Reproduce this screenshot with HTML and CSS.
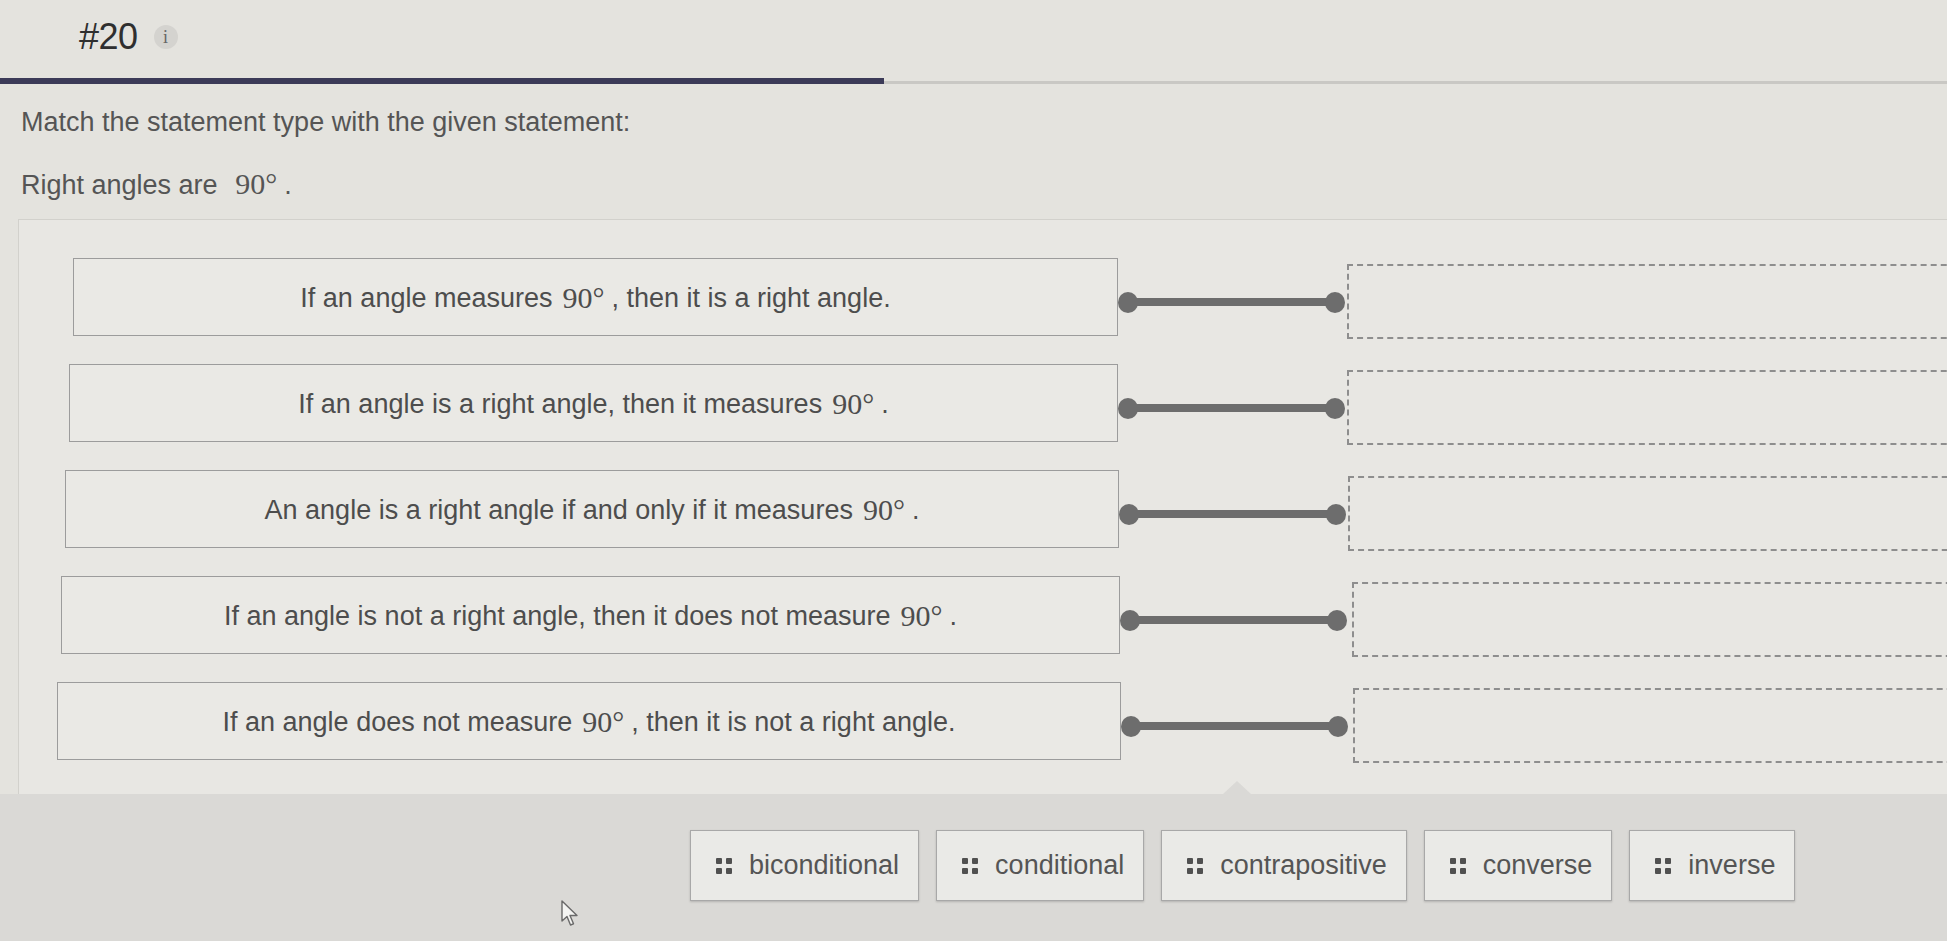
FILE: index.html
```html
<!DOCTYPE html>
<html lang="en">
<head>
<meta charset="utf-8">
<title>#20 Match statement types</title>
<link rel="stylesheet" href="styles.css">
</head>
<body>
<div class="page">
  <header class="qhead">
    <span class="qnum">#20</span>
    <span class="info">i</span>
  </header>
  <div class="progress"><div class="progress-fill"></div><div class="progress-track"></div></div>

  <div class="prompt">
    <p class="instr">Match the statement type with the given statement:</p>
    <p class="given">Right angles are <span class="math">90°</span>.</p>
  </div>

  <section class="panel">
    <div class="row r1">
      <div class="stmt">If an angle measures <span class="math">90°</span>, then it is a right angle.</div>
      <div class="link"><span class="dot"></span><span class="bar"></span><span class="dot"></span></div>
      <div class="drop"></div>
    </div>
    <div class="row r2">
      <div class="stmt">If an angle is a right angle, then it measures <span class="math">90°</span>.</div>
      <div class="link"><span class="dot"></span><span class="bar"></span><span class="dot"></span></div>
      <div class="drop"></div>
    </div>
    <div class="row r3">
      <div class="stmt">An angle is a right angle if and only if it measures <span class="math">90°</span>.</div>
      <div class="link"><span class="dot"></span><span class="bar"></span><span class="dot"></span></div>
      <div class="drop"></div>
    </div>
    <div class="row r4">
      <div class="stmt">If an angle is not a right angle, then it does not measure <span class="math">90°</span>.</div>
      <div class="link"><span class="dot"></span><span class="bar"></span><span class="dot"></span></div>
      <div class="drop"></div>
    </div>
    <div class="row r5">
      <div class="stmt">If an angle does not measure <span class="math">90°</span>, then it is not a right angle.</div>
      <div class="link"><span class="dot"></span><span class="bar"></span><span class="dot"></span></div>
      <div class="drop"></div>
    </div>
  </section>

  <section class="tray">
    <div class="chips">
      <div class="chip"><span class="grip"><i></i><i></i><i></i><i></i></span>biconditional</div>
      <div class="chip"><span class="grip"><i></i><i></i><i></i><i></i></span>conditional</div>
      <div class="chip"><span class="grip"><i></i><i></i><i></i><i></i></span>contrapositive</div>
      <div class="chip"><span class="grip"><i></i><i></i><i></i><i></i></span>converse</div>
      <div class="chip"><span class="grip"><i></i><i></i><i></i><i></i></span>inverse</div>
    </div>
  </section>

  <svg class="cursor" width="20" height="28" viewBox="0 0 20 28" aria-hidden="true">
    <path d="M2 1 L2 21 L7 16.5 L10.5 25 L13.5 23.8 L10 15.5 L17 15.5 Z" fill="#f4f4f2" stroke="#6a6a6a" stroke-width="1.4" stroke-linejoin="round"/>
  </svg>
</div>
</body>
</html>
```

FILE: styles.css
```css
* { box-sizing: border-box; }

html, body {
  margin: 0;
  padding: 0;
}

body {
  width: 1947px;
  height: 941px;
  overflow: hidden;
  background: #e4e3de;
  font-family: "Liberation Sans", Arial, sans-serif;
  color: #4d4d4d;
}

.page {
  position: relative;
  width: 1947px;
  height: 941px;
  overflow: hidden;
  display: flex;
  flex-direction: column;
}

/* header */
.qhead {
  height: 78px;
  display: flex;
  align-items: center;
  padding-left: 79px;
  padding-bottom: 4px;
}

.qnum {
  font-size: 36px;
  color: #2f2f2f;
  letter-spacing: -0.5px;
}

.info {
  width: 24px;
  height: 24px;
  margin-left: 16px;
  border-radius: 50%;
  background: #d4d3cf;
  color: #666;
  font-family: "Liberation Serif", serif;
  font-size: 18px;
  line-height: 24px;
  text-align: center;
}

/* progress */
.progress {
  display: flex;
  align-items: flex-end;
  height: 6px;
}

.progress-fill {
  width: 884px;
  height: 6px;
  background: #3c3b58;
}

.progress-track {
  flex: 1;
  height: 3px;
  background: #c9c8c4;
}

/* prompt */
.prompt {
  padding-left: 21px;
}

.instr,
.given {
  margin: 0;
  font-size: 27px;
  line-height: 36px;
  color: #555;
}

.instr { margin-top: 20px; }
.given { margin-top: 26px; }

.math {
  font-family: "Liberation Serif", "Times New Roman", serif;
  font-size: 30px;
  margin: 0 7px 0 10px;
}

/* panel */
.panel {
  margin-top: 16px;
  margin-left: 18px;
  width: 1950px;
  height: 575px;
  flex: none;
  border-top: 1px solid #d2d1cc;
  border-left: 1px solid #d2d1cc;
  background: #e8e7e3;
  padding-top: 38px;
  display: flex;
  flex-direction: column;
  gap: 28px;
}

.row {
  display: flex;
  height: 78px;
  flex: none;
}

.stmt {
  flex: none;
  width: 1045px;
  margin-left: 54px;
  height: 78px;
  border: 1px solid #9c9c9c;
  background: #eae9e5;
  display: flex;
  align-items: center;
  justify-content: center;
  padding-top: 2px;
  font-size: 27px;
  color: #4d4d4d;
  white-space: nowrap;
}

.r2 .stmt { margin-left: 50px; width: 1049px; }
.r3 .stmt { margin-left: 46px; width: 1054px; }
.r4 .stmt { margin-left: 42px; width: 1059px; }
.r5 .stmt { margin-left: 38px; width: 1064px; }

.link {
  flex: none;
  width: 229px;
  display: flex;
  align-items: center;
  padding: 10px 2px 0 0;
}

.dot {
  flex: none;
  width: 20px;
  height: 21px;
  border-radius: 50%;
  background: #6d6d6d;
}

.bar {
  flex: 1;
  height: 8px;
  margin: 0 -3px;
  background: #6d6d6d;
}

.drop {
  flex: none;
  width: 640px;
  height: 75px;
  margin-top: 6px;
  border: 2px dashed #8e8e8e;
  border-right: none;
}

.r4 .drop, .r5 .drop { margin-left: 3px; }

/* tray */
.tray {
  position: relative;
  flex: 1;
  background: #dad9d6;
  padding-top: 36px;
  padding-left: 690px;
}

.tray::before {
  content: "";
  position: absolute;
  left: 1223px;
  top: -13px;
  border-left: 14px solid transparent;
  border-right: 14px solid transparent;
  border-bottom: 13px solid #dad9d6;
}

.chips {
  display: flex;
  gap: 17px;
}

.chip {
  height: 71px;
  display: flex;
  align-items: center;
  gap: 17px;
  padding: 0 19px 0 25px;
  border: 1px solid #a8a8a8;
  background: #eaeae7;
  box-shadow: 0 1px 2px rgba(0, 0, 0, 0.18);
  font-size: 27px;
  color: #555;
}

.grip {
  display: grid;
  grid-template-columns: 6px 6px;
  grid-template-rows: 6px 6px;
  gap: 4px;
}

.grip i {
  display: block;
  background: #505050;
  border-radius: 1px;
}

.cursor {
  position: absolute;
  left: 560px;
  top: 900px;
}
```
